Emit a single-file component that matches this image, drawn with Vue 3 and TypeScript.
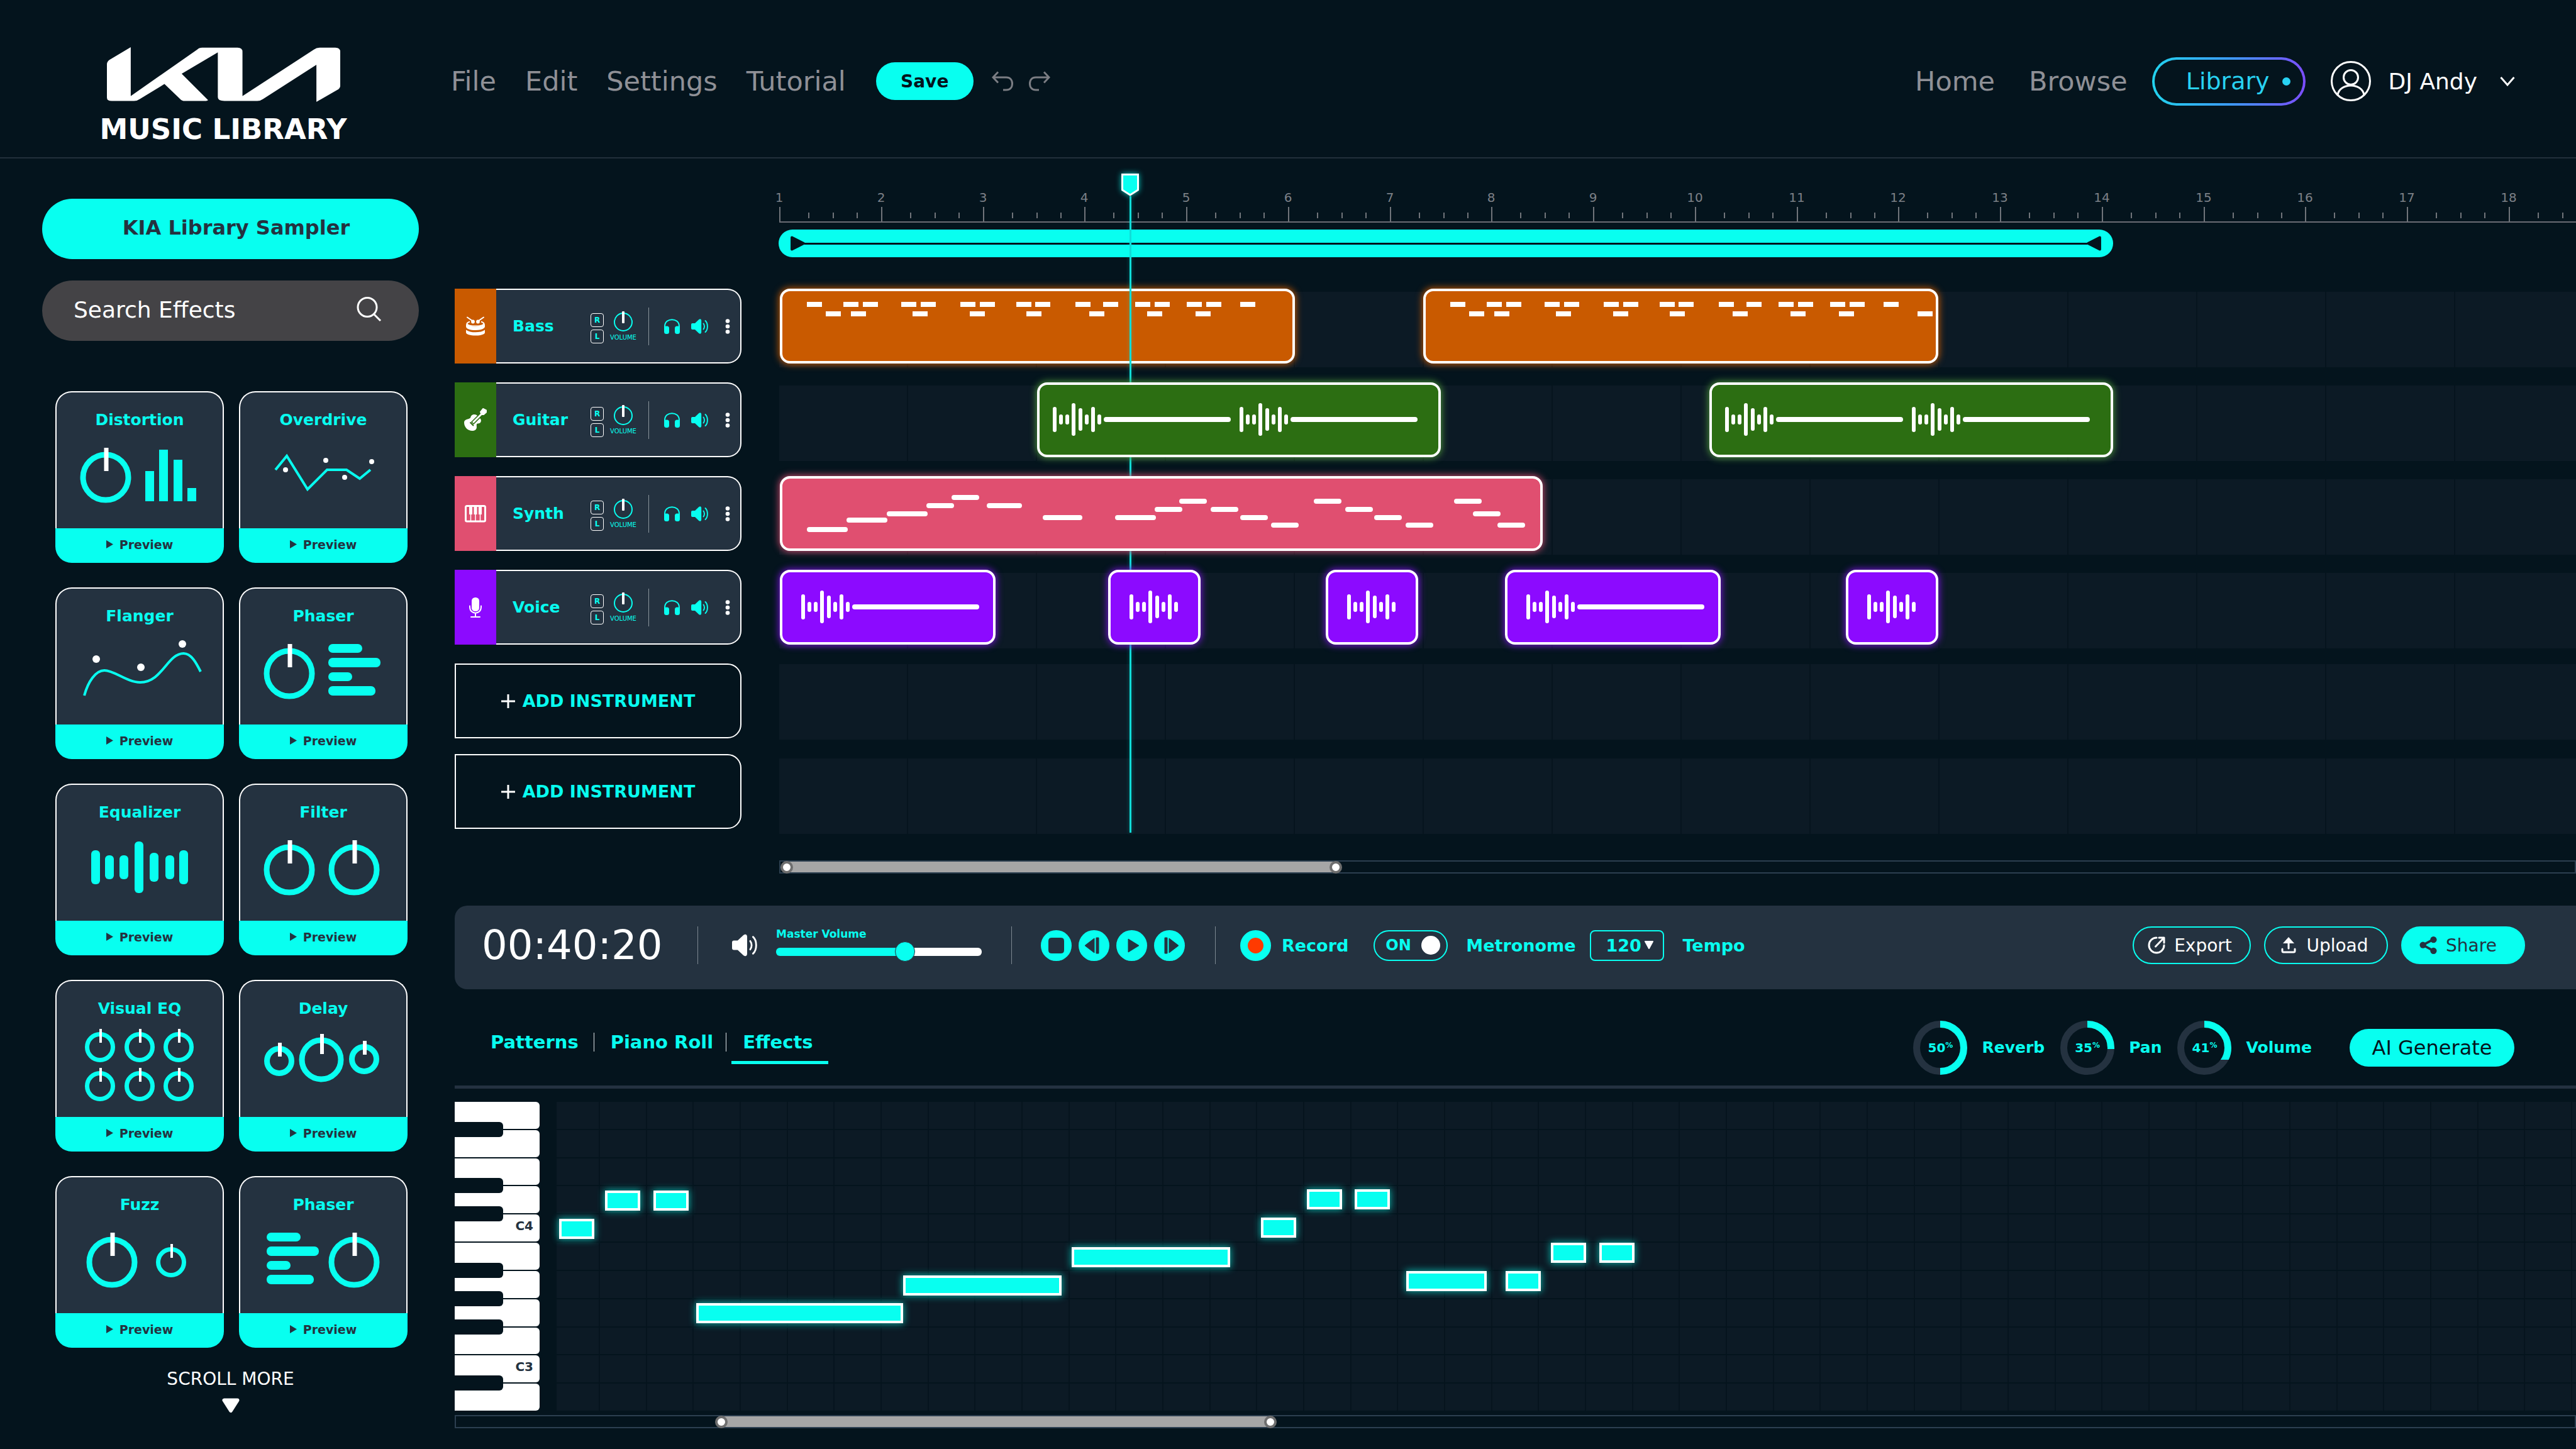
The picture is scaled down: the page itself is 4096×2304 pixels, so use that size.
<script setup lang="ts">
import { computed, ref } from 'vue'

type Shape =
  | { t: 'ring'; cx: number; cy: number; r: number; w: number; nw: number; nh: number; up: number }
  | { t: 'bar'; x: number; y: number; w: number; h: number; rx: number }
  | { t: 'line'; d: string }
  | { t: 'dot'; cx: number; cy: number; r: number }

const big = (cx: number): Shape => ({ t: 'ring', cx, cy: 75, r: 36, w: 9, nw: 7, nh: 37, up: 47 })
const small = (cx: number, cy: number, w: number, nw: number): Shape => ({ t: 'ring', cx, cy, r: 24 - w / 2, w, nw, nh: 22, up: 29 })
const bar = (x: number, y: number, w: number, h: number, rx: number): Shape => ({ t: 'bar', x, y, w, h, rx })
const dot = (cx: number, cy: number, r: number): Shape => ({ t: 'dot', cx, cy, r })

const phaserBars = (x: number): Shape[] => [
  bar(x, 28, 54, 14, 7),
  bar(x, 50, 83, 15, 7),
  bar(x, 73, 38, 14, 7),
  bar(x, 95, 75, 15, 7),
]

const effects: { name: string; shapes: Shape[] }[] = [
  { name: 'Distortion', shapes: [big(78), bar(141, 65, 14, 48, 0), bar(163, 31, 14, 82, 0), bar(186, 47, 14, 66, 0), bar(208, 92, 14, 21, 0)] },
  {
    name: 'Overdrive',
    shapes: [
      { t: 'line', d: 'M56 63 L74 41 L107 94 L138 63 H169 L190 77 L207 63' },
      dot(72, 63, 4), dot(136, 48, 4), dot(166, 75, 4), dot(209, 50, 4),
    ],
  },
  {
    name: 'Flanger',
    shapes: [
      { t: 'line', d: 'M44 110 C50 88 62 70 76 70 C92 70 112 89 133 89 C168 89 176 43 202 43 C214 43 222 58 229 72' },
      dot(63, 52, 6), dot(134, 65, 6), dot(200, 28, 6),
    ],
  },
  { name: 'Phaser', shapes: [big(78), ...phaserBars(140)] },
  {
    name: 'Equalizer',
    shapes: [
      bar(55, 44, 14, 54, 6), bar(77, 52, 14, 38, 6), bar(100, 52, 14, 38, 6), bar(124, 30, 14, 82, 6),
      bar(148, 48, 14, 46, 6), bar(173, 52, 14, 38, 6), bar(195, 44, 14, 54, 6),
    ],
  },
  { name: 'Filter', shapes: [big(78), big(181)] },
  { name: 'Visual EQ', shapes: [45, 107].flatMap((cy) => [69, 132, 194].map((cx) => small(cx, cy, 7, 4))) },
  {
    name: 'Delay',
    shapes: [
      small(62, 67, 9, 6),
      { t: 'ring', cx: 129, cy: 65, r: 31, w: 9, nw: 6, nh: 32, up: 41 },
      small(197, 64, 9, 6),
    ],
  },
  { name: 'Fuzz', shapes: [big(88), small(182, 75, 7, 4)] },
  { name: 'Phaser', shapes: [...phaserBars(42), big(181)] },
]

type Box = { x: number; y: number; w: number }
type Clip = { x: number; w: number; blocks?: Box[]; waves?: number[]; tail?: boolean }

const bassTop = [43, 101, 132, 193, 224, 287, 318, 376, 406, 470, 514, 565, 596, 647, 678, 732]
const bassLow = [73, 113, 211, 302, 392, 492, 584, 661]
const bass = (extra: number[]): Box[] => [
  ...bassTop.map((x) => ({ x, y: 21, w: 24 })),
  ...[...bassLow, ...extra].map((x) => ({ x, y: 36, w: 24 })),
]
const melody: Box[] = [
  [43, 81, 65], [106, 66, 65], [170, 56, 65], [233, 43, 44], [273, 30, 44], [329, 43, 56], [418, 62, 63],
  [533, 62, 65], [596, 49, 44], [635, 36, 44], [685, 49, 44], [732, 62, 44], [781, 74, 44], [849, 36, 44],
  [899, 49, 44], [945, 62, 44], [995, 74, 44], [1072, 36, 44], [1102, 56, 44], [1141, 74, 44],
].map(([x, y, w]) => ({ x, y, w }))

const tracks: { name: string; icon: string; kind: string; clips: Clip[] }[] = [
  { name: 'Bass', icon: 'drum', kind: 'bass', clips: [{ x: 1, w: 819, blocks: bass([]) }, { x: 1024, w: 819, blocks: bass([786]) }] },
  { name: 'Guitar', icon: 'guitar', kind: 'guitar', clips: [{ x: 410, w: 642, waves: [28, 325], tail: true }, { x: 1479, w: 642, waves: [28, 325], tail: true }] },
  { name: 'Synth', icon: 'keys', kind: 'synth', clips: [{ x: 1, w: 1213, blocks: melody }] },
  {
    name: 'Voice', icon: 'mic', kind: 'voice',
    clips: [
      { x: 1, w: 343, waves: [37], tail: true }, { x: 523, w: 147, waves: [37] }, { x: 869, w: 147, waves: [37] },
      { x: 1154, w: 343, waves: [37], tail: true }, { x: 1696, w: 147, waves: [37] },
    ],
  },
]
const wave = [[0, 20], [10, 8], [20, 8], [30, 26], [41, 18], [51, 8], [61, 20], [71, 8]]

const BAR = 161.75
const bars = Array.from({ length: 18 }, (_, i) => ({ n: i + 1, w: Math.round((i + 1) * BAR) - Math.round(i * BAR) }))

const volume = ref(64)
const fill = computed(() => `${volume.value}%`)
const metronome = ref(true)
const tempo = ref('120')
const search = ref('')

const gauges = [
  { name: 'Reverb', value: 50, cut: 86 },
  { name: 'Pan', value: 35, cut: 45 },
  { name: 'Volume', value: 41, cut: 62 },
]

const keys = Array.from({ length: 11 }, (_, i) => ({
  label: i === 4 ? 'C4' : i === 9 ? 'C3' : '',
  sharp: [0, 2, 3, 5, 6, 7, 9].includes(i),
}))
const notes: Box[] = [
  [4, 186, 56], [77, 141, 56], [154, 141, 56], [222, 320, 329], [551, 276, 252], [819, 231, 252], [1120, 184, 56],
  [1193, 139, 56], [1269, 139, 56], [1351, 269, 128], [1509, 269, 56], [1581, 224, 56], [1658, 224, 56],
].map(([x, y, w]) => ({ x, y, w }))
</script>

<template>
  <div class="app">
    <svg class="defs" aria-hidden="true">
      <symbol id="speaker" viewBox="0 0 27 24">
        <path fill="currentColor" d="M2 7H6L12 1.3C14 -.4 16.2 0 16.2 3V21C16.2 24 14 24.4 12 22.7L6 17H2Q0 17 0 15V9Q0 7 2 7Z" />
        <path fill="none" stroke="currentColor" stroke-width="1.9" stroke-linecap="round" d="M19.5 7.5C21.5 10 21.5 14 19.5 16.5M22.5 3C27 7 27 17 22.5 21" />
      </symbol>
      <symbol id="headphones" viewBox="0 0 25 24">
        <path fill="none" stroke="currentColor" stroke-width="2" d="M1 15V12C1 -2.5 24 -2.5 24 12V15" />
        <rect y="11.5" width="8" height="12.5" rx="3.5" fill="currentColor" /><rect x="17" y="11.5" width="8" height="12.5" rx="3.5" fill="currentColor" />
      </symbol>
      <symbol id="drum" viewBox="0 0 30 31">
        <path fill="none" stroke="currentColor" stroke-width="2" stroke-linecap="round" d="M2 1.5L10 7M28 1.5L20 7" />
        <circle cx="11" cy="8.5" r="2.9" fill="currentColor" /><circle cx="19" cy="8.5" r="2.9" fill="currentColor" />
        <path fill="none" stroke="currentColor" stroke-width="2" d="M6 8.5C-2 11 1 15.5 15 15.5S32 11 24 8.5" />
        <path fill="currentColor" d="M0 11C1 15 7 16.5 15 16.5S29 15 30 11V16C30 20 23 22 15 22S0 20 0 16ZM0 21.5C4 24.5 9 25.3 15 25.3S26 24.5 30 21.5V25.5C30 29 23 30.5 15 30.5S0 29 0 25.5Z" />
      </symbol>
      <symbol id="guitar" viewBox="0 0 36 37">
        <path fill="currentColor" d="M0 23C0 17 7 18 10 15.5C11 10 16 9 20 11L26 17C28 19 27 25 21 24.5C18 26 22 31 18 34.5C11 39 0 33 0 23Z" />
        <path fill="none" stroke="#2c6e12" stroke-width="6" d="M13 24L28 9" />
        <path fill="none" stroke="#2c6e12" stroke-width="2" d="M9.5 22.5L15 28" />
        <path fill="none" stroke="currentColor" stroke-width="3" d="M14 23L29 8" />
        <path fill="currentColor" stroke="currentColor" stroke-width="2" stroke-linejoin="round" d="M26 6L30 1L35 3.5V6.5L31 10H28Z" />
      </symbol>
      <symbol id="keys" viewBox="0 0 34 28">
        <rect x="1.5" y="1.5" width="31" height="24.5" rx="2" fill="none" stroke="currentColor" stroke-width="3" />
        <path fill="currentColor" d="M7 1h5v14h-5zM14.5 1h5v14h-5zM22 1h5v14h-5z" />
        <path stroke="currentColor" stroke-width="1.5" d="M9.5 12V26M17 12V26M24.5 12V26" />
      </symbol>
      <symbol id="mic" viewBox="0 0 20 32">
        <rect x="4" width="12" height="22" rx="5.5" fill="currentColor" />
        <path fill="none" stroke="currentColor" stroke-width="2" stroke-linecap="round" d="M1 13.5V15C1 28 19 28 19 15V13.5M10 25V31M3 31H17" />
      </symbol>
      <symbol id="tri" viewBox="0 0 24 24">
        <path fill="currentColor" stroke="currentColor" stroke-width="4" stroke-linejoin="round" d="M3 3L21 12L3 21Z" />
      </symbol>
    </svg>

    <header class="top">
      <div class="brand">
        <svg class="logo" viewBox="131 200 284 233" preserveAspectRatio="none" aria-label="KIA">
          <path fill="#fff" d="M160 200V408L241 210Q243 202 247 202H290Q296 202 296 220V408L383 210Q386 202 390 202H409Q415 202 415 220V365Q415 375 411 383L386 433V275L321 421Q318 429 314 429H274Q266 429 266 413V222L222 313L254 425Q254 429 250 429H226Q222 429 220 420L201 357L171 421Q168 429 164 429H137Q131 429 131 415V272Q131 262 134 254Z" />
        </svg>
        <strong>MUSIC LIBRARY</strong>
      </div>
      <nav class="menu">
        <a href="#file">File</a><a href="#edit">Edit</a><a href="#settings">Settings</a><a href="#tutorial">Tutorial</a>
      </nav>
      <button class="save">Save</button>
      <div class="history">
        <button aria-label="Undo">
          <svg viewBox="0 0 34 32"><path d="M10 1.5L2 10L10 18.5M2 10H23C29 10 32.5 14 32.5 20S29 30 23 30H18" /></svg>
        </button>
        <button aria-label="Redo">
          <svg viewBox="0 0 34 32"><path d="M24 1.5L32 10L24 18.5M32 10H11C5 10 1.5 14 1.5 20S5 30 11 30H16" /></svg>
        </button>
      </div>
      <nav class="site">
        <a href="#home">Home</a><a href="#browse">Browse</a>
        <a href="#library" class="current">Library<i></i></a>
      </nav>
      <button class="user">
        <svg class="avatar" viewBox="0 0 64 64">
          <g fill="none" stroke="#fff" stroke-width="3"><circle cx="32" cy="32" r="30.5" /><circle cx="32" cy="26" r="11.5" /><path d="M11 54C14 34 50 34 53 54" /></g>
        </svg>
        <span>DJ Andy</span>
        <svg class="chev" viewBox="0 0 24 17"><path fill="none" stroke="#fff" stroke-width="3" d="M1.5 2L12 14L22.5 2" /></svg>
      </button>
    </header>

    <div class="page">
      <aside class="side">
        <button class="sampler">KIA Library Sampler</button>
        <label class="search">
          <input v-model="search" type="search" placeholder="Search Effects" aria-label="Search Effects" />
          <svg viewBox="0 0 40 40"><path fill="none" stroke="#fff" stroke-width="3" d="M28 28L38 38M32 16.5A15 15 0 1 1 2 16.5A15 15 0 0 1 32 16.5Z" /></svg>
        </label>
        <div class="cards">
          <article v-for="(fx, i) in effects" :key="i" class="card">
            <div class="face">
              <h3>{{ fx.name }}</h3>
              <svg viewBox="0 0 264 156">
                <template v-for="(s, j) in fx.shapes" :key="j">
                  <g v-if="s.t === 'ring'">
                    <circle :cx="s.cx" :cy="s.cy" :r="s.r" :stroke-width="s.w" fill="none" stroke="#08fff0" />
                    <rect :x="s.cx - s.nw / 2 + 1" :y="s.cy - s.up" :width="s.nw" :height="s.nh" fill="#fff" />
                  </g>
                  <rect v-else-if="s.t === 'bar'" :x="s.x" :y="s.y" :width="s.w" :height="s.h" :rx="s.rx" fill="#08fff0" />
                  <path v-else-if="s.t === 'line'" :d="s.d" fill="none" stroke="#08fff0" stroke-width="4" />
                  <circle v-else :cx="s.cx" :cy="s.cy" :r="s.r" fill="#fff" />
                </template>
              </svg>
            </div>
            <button class="preview">
              <svg viewBox="0 0 11 13"><path fill="currentColor" d="M0 0L11 6.5L0 13Z" /></svg>Preview
            </button>
          </article>
        </div>
        <button class="more">
          SCROLL MORE
          <svg viewBox="0 0 28 24"><path fill="#fff" stroke="#fff" stroke-width="6" stroke-linejoin="round" d="M3.5 3.5H24.5L14 20Z" /></svg>
        </button>
      </aside>

      <main class="main">
        <section class="arrange">
          <div class="heads">
            <div v-for="t in tracks" :key="t.name" class="head">
              <div class="tag" :class="t.kind"><svg :class="'icon-' + t.icon"><use :href="'#' + t.icon" /></svg></div>
              <div class="strip">
                <span class="name">{{ t.name }}</span>
                <div class="rl"><button>R</button><button>L</button></div>
                <div class="vol">
                  <svg viewBox="0 0 30 32"><circle cx="15" cy="17" r="14" fill="none" stroke="#08fff0" stroke-width="2" /><rect x="13" y="0" width="4" height="19" rx="1" fill="#fff" /></svg>
                  <span>VOLUME</span>
                </div>
                <div class="sound">
                  <button aria-label="Solo"><svg class="phones"><use href="#headphones" /></svg></button>
                  <button aria-label="Mute"><svg class="spk"><use href="#speaker" /></svg></button>
                  <button class="kebab" aria-label="More"><svg class="dots" viewBox="0 0 8 24"><g fill="#fff"><circle cx="4" cy="3.5" r="3.3" /><circle cx="4" cy="12" r="3.3" /><circle cx="4" cy="20.5" r="3.3" /></g></svg></button>
                </div>
              </div>
            </div>
            <div class="adds">
              <button v-for="n in 2" :key="n" class="add">
                <svg viewBox="0 0 22 22"><path stroke="#fff" stroke-width="3" d="M11 0V22M0 11H22" /></svg>ADD INSTRUMENT
              </button>
            </div>
          </div>

          <div class="timeline">
            <div class="ruler">
              <div v-for="b in bars" :key="b.n" class="bar" :style="{ width: b.w + 'px' }"><span>{{ b.n }}</span></div>
            </div>
            <div class="loop">
              <svg><use href="#tri" /></svg><i></i><svg class="flip"><use href="#tri" /></svg>
            </div>
            <div class="lanes">
              <div v-for="t in tracks" :key="t.name" class="lane">
                <div v-for="(c, i) in t.clips" :key="i" class="clip" :class="t.kind" :style="{ left: c.x + 'px', width: c.w + 'px' }">
                  <svg :viewBox="`4 4 ${c.w - 8} 111`" fill="#fff">
                    <rect v-for="(b, j) in c.blocks" :key="'b' + j" :x="b.x" :y="b.y" :width="b.w" height="8" :rx="t.kind === 'synth' ? 4 : 0" />
                    <g v-for="w in c.waves" :key="w">
                      <rect v-for="([x, h], j) in wave" :key="j" :x="w + x - 3" :y="59 - h" width="6" :height="h * 2" rx="3" />
                      <rect v-if="c.tail" :x="w + 78" y="55" width="202" height="8" rx="4" />
                    </g>
                  </svg>
                </div>
              </div>
              <div class="spare"><div v-for="n in 2" :key="n" class="lane"></div></div>
            </div>
            <div class="scroll first"><div class="thumb"><i></i><i></i></div></div>
            <div class="playhead">
              <svg viewBox="0 0 28 36"><path fill="#08fff0" stroke="#fff" stroke-width="3" d="M1.5 1.5H26.5V26L14 34L1.5 26Z" /></svg>
              <i></i>
            </div>
          </div>
        </section>

        <section class="transport">
          <time>00:40:20</time>
          <hr />
          <svg class="master"><use href="#speaker" /></svg>
          <label class="mv">Master Volume
            <input v-model.number="volume" type="range" min="0" max="100" :style="{ '--fill': fill }" />
          </label>
          <hr />
          <div class="buttons">
            <button aria-label="Stop"><svg viewBox="0 0 49 49"><rect x="12.5" y="12.5" width="24" height="24" rx="4" /></svg></button>
            <button aria-label="Back"><svg viewBox="0 0 49 49"><path d="M10 24.5L25 13V36Z" /><rect x="28" y="12" width="4" height="25" /></svg></button>
            <button aria-label="Play"><svg viewBox="0 0 49 49"><path d="M19 14V35L36 24.5Z" /></svg></button>
            <button aria-label="Forward"><svg viewBox="0 0 49 49"><path d="M39 24.5L24 13V36Z" /><rect x="17" y="12" width="4" height="25" /></svg></button>
          </div>
          <hr />
          <button class="record"><i></i>Record</button>
          <div class="metro">
            <label class="toggle"><span>ON</span><input id="metronome" v-model="metronome" type="checkbox" role="switch" aria-label="Metronome on" /></label>
            <label for="metronome">Metronome</label>
          </div>
          <div class="tempo">
            <div class="pick">
              <select id="tempo" v-model="tempo"><option>120</option><option>140</option></select>
              <svg viewBox="0 0 14 14"><path fill="#fff" stroke="#fff" stroke-width="2" stroke-linejoin="round" d="M1 1H13L7 12Z" /></svg>
            </div>
            <label for="tempo">Tempo</label>
          </div>
          <div class="actions">
            <button class="export">
              <svg viewBox="0 0 28 28"><path fill="none" stroke="#fff" stroke-width="3" stroke-linecap="round" stroke-linejoin="round" d="M14 2A12 12 0 1 0 26 14M12.5 16L25 3M18 2H26V10" /></svg>Export
            </button>
            <button>
              <svg viewBox="0 0 28 28"><path fill="none" stroke="#fff" stroke-width="3" stroke-linecap="round" d="M14 6V19M4 20V23Q4 25 6 25H22Q24 25 24 23V20" /><path fill="#fff" d="M14 1L23 11H5Z" /></svg>Upload
            </button>
            <button class="share">
              <svg viewBox="0 0 30 30"><path fill="none" stroke="#243240" stroke-width="4" d="M23 5.5L6 14.5L24 24.5" /><g fill="#243240"><circle cx="6" cy="14.5" r="5.5" /><circle cx="24" cy="5.5" r="5.5" /><circle cx="24" cy="24.5" r="5.5" /></g></svg>Share
            </button>
          </div>
        </section>

        <section class="editorbar">
          <nav class="tabs">
            <a href="#patterns">Patterns</a><a href="#roll">Piano Roll</a><a href="#effects" class="on">Effects</a>
          </nav>
          <div class="gauges">
            <div v-for="g in gauges" :key="g.name" class="gauge">
              <div class="dial">
                <svg viewBox="0 0 86 86">
                  <clipPath :id="'cut-' + g.name"><rect x="43" y="0" width="43" :height="g.cut" /></clipPath>
                  <circle cx="43" cy="43" r="37.5" fill="none" stroke="#243240" stroke-width="11" />
                  <circle cx="43" cy="43" r="37.5" fill="none" stroke="#08fff0" stroke-width="11" :clip-path="`url(#cut-${g.name})`" />
                </svg>
                <b>{{ g.value }}<small>%</small></b>
              </div>
              <span>{{ g.name }}</span>
            </div>
          </div>
          <button class="ai">AI Generate</button>
        </section>

        <section class="roll">
          <div class="keys">
            <div v-for="(k, i) in keys" :key="i" class="key" :class="{ sharp: k.sharp }">{{ k.label }}</div>
          </div>
          <div class="grid">
            <div v-for="n in 11" :key="n" class="row"></div>
            <i v-for="(n, i) in notes" :key="i" class="note" :style="{ left: n.x + 'px', top: n.y + 'px', width: n.w + 'px' }"></i>
          </div>
        </section>
        <div class="scroll second"><div class="thumb"><i></i><i></i></div></div>
      </main>
    </div>
  </div>
</template>

<style>
body { background: #04141d; }
</style>

<style scoped>
.app {
  --cyan: #08fff0;
  --panel: #243240;
  --bg: #04141d;
  min-height: 100vh;
  overflow-x: clip;
  background: var(--bg);
  color: #fff;
  font-family: "DejaVu Sans", sans-serif;
  box-sizing: border-box;
}
.app *, .app *::before, .app *::after { box-sizing: border-box; }
button, input, select { font-family: inherit; margin: 0; }
button { border: 0; background: none; color: inherit; padding: 0; cursor: pointer; white-space: nowrap; }
a { color: inherit; text-decoration: none; white-space: nowrap; }
svg { display: block; flex: none; }
.defs { position: absolute; width: 0; height: 0; }

.top { display: flex; align-items: center; padding: 8px 97px 0 155px; border-bottom: 2px solid #22303b; }
.brand { width: 400px; display: flex; flex-direction: column; align-items: center; gap: 22px; padding: 67px 0 22px; }
.logo { width: 371px; height: 87px; }
.brand strong { font-size: 45px; line-height: 44px; white-space: nowrap; }
.menu { display: flex; gap: 46px; margin-left: 162px; }
.menu a, .site a { font-size: 43px; line-height: 48px; color: #8f9096; }
.save { width: 155px; height: 60px; margin-left: 48px; border-radius: 30px; background: var(--cyan); color: #04141d; font-size: 28px; font-weight: 700; }
.history { display: flex; gap: 25px; margin-left: 29px; }
.history svg { width: 34px; height: 32px; fill: none; stroke: #7b7d83; stroke-width: 3; }
.site { display: flex; align-items: center; gap: 54px; margin-left: auto; }
.site .current {
  display: flex; align-items: center; justify-content: flex-end; gap: 20px; width: 244px; height: 77px; margin-left: -15px; padding-right: 20px;
  border: 4px solid transparent; border-radius: 39px; font-size: 38px; color: #28d2f2;
  background: linear-gradient(var(--bg), var(--bg)) padding-box, linear-gradient(90deg, #22d3ee, #3b9bf5 50%, #7c4dff) border-box;
}
.current i { width: 13px; height: 13px; border-radius: 50%; background: #28d2f2; }
.user { display: flex; align-items: center; margin-left: 40px; font-size: 36px; }
.avatar { width: 64px; height: 64px; margin-right: 28px; }
.chev { width: 24px; height: 17px; margin-left: 36px; }

.page { display: flex; }
.side { width: 723px; flex: none; padding: 64px 57px 0 67px; display: flex; flex-direction: column; }
.sampler { height: 96px; padding: 0 0 4px 18px; border-radius: 48px; background: var(--cyan); color: var(--panel); font-size: 32px; font-weight: 700; }
.search { display: flex; align-items: center; height: 96px; margin-top: 34px; padding: 0 59px 4px 50px; border-radius: 48px; background: #444346; }
.search input { flex: 1; min-width: 0; border: 0; padding: 0; outline: 0; background: none; color: #fff; font-size: 36px; }
.search input::placeholder { color: #fff; opacity: 1; }
.search svg { width: 40px; height: 40px; }
.cards { display: grid; grid-template-columns: 1fr 1fr; gap: 39px 24px; margin-top: 80px; padding: 0 18px 0 21px; }
.face { border: 2px solid #fff; border-bottom: 0; border-radius: 26px 26px 0 0; background: var(--panel); padding-top: 28px; }
.face h3 { margin: 0; font-size: 25px; line-height: 32px; text-align: center; color: var(--cyan); }
.face svg { width: 100%; height: 156px; }
.preview { display: flex; align-items: center; justify-content: center; gap: 10px; width: 100%; height: 55px; padding-bottom: 4px; border-radius: 0 0 26px 26px; background: var(--cyan); color: var(--panel); font-size: 19px; font-weight: 700; }
.preview svg { width: 11px; height: 13px; }
.more { display: flex; flex-direction: column; align-items: center; gap: 14px; margin-top: 34px; font-size: 28px; line-height: 32px; }
.more svg { width: 28px; height: 24px; }

.main { flex: 1; min-width: 0; }
.arrange { display: flex; gap: 60px; }
.heads { width: 456px; flex: none; padding-top: 207px; display: flex; flex-direction: column; gap: 30px; }
.head { display: flex; height: 119px; }
.tag { width: 66px; display: flex; align-items: center; justify-content: center; }
.bass { background: #c95a00; --glow: #c95a00; }
.guitar { background: #2c6e12; --glow: #4f9a3a; }
.synth { background: #e04f70; --glow: #c8486a; }
.voice { background: #8c0aff; --glow: #7a14e0; }
.icon-drum { width: 30px; height: 31px; }
.icon-guitar { width: 36px; height: 37px; }
.icon-keys { width: 34px; height: 28px; }
.icon-mic { width: 20px; height: 32px; }
.strip { flex: 1; display: flex; align-items: center; border: 2px solid #fff; border-left: 0; border-radius: 0 22px 22px 0; background: var(--panel); padding-left: 26px; color: var(--cyan); }
.name { width: 124px; font-size: 25px; font-weight: 700; }
.rl { display: flex; flex-direction: column; gap: 4px; padding-top: 6px; }
.rl button { width: 21px; height: 22px; border: 1px solid #fff; border-radius: 4px; font-size: 12px; font-weight: 700; line-height: 20px; }
.vol { width: 44px; margin-left: 9px; display: flex; flex-direction: column; align-items: center; font-size: 10px; line-height: 12px; gap: 4px; }
.vol svg { width: 30px; height: 32px; }
.sound { display: flex; align-items: center; height: 60px; margin-left: 18px; padding-left: 24px; border-left: 1px solid #8a949c; gap: 18px; }
.phones { width: 25px; height: 24px; }
.spk { width: 27px; height: 24px; }
.kebab { margin-left: 9px; }
.dots { width: 8px; height: 24px; }
.adds { display: flex; flex-direction: column; gap: 25px; }
.add { display: flex; align-items: center; justify-content: center; gap: 12px; height: 119px; border: 2px solid #fff; border-radius: 0 22px 22px 0; color: var(--cyan); font-size: 27px; font-weight: 700; }
.add svg { width: 22px; height: 22px; }

.timeline { position: relative; flex: 1; min-width: 0; padding-top: 48px; }
.ruler { display: flex; height: 54px; border-bottom: 2px solid #6a6c74; }
.bar {
  flex: none; color: #7c8087; font-size: 20px; line-height: 28px; align-self: stretch;
  --t: linear-gradient(#70747a, #70747a);
  background: var(--t) 0 29px / 2px 24px no-repeat, var(--t) 46px 38px / 2px 9px no-repeat, var(--t) 85px 38px / 2px 9px no-repeat, var(--t) 123px 38px / 2px 9px no-repeat;
}
.bar:last-child { flex: 0 1 auto; min-width: 0; }
.bar span { display: block; width: 60px; margin-left: -30px; text-align: center; }
.loop { display: flex; align-items: center; width: 2122px; height: 44px; margin: 11px 0 0 -1px; padding: 0 18px; border-radius: 22px; background: var(--cyan); color: #04141d; }
.loop svg { width: 25px; height: 26px; }
.loop .flip { transform: scaleX(-1); }
.loop i { flex: 1; height: 3px; margin: 0 -2px; background: #04141d; }
.lanes { display: flex; flex-direction: column; gap: 29px; margin-top: 55px; }
.lane { position: relative; height: 120px; background: repeating-linear-gradient(90deg, #0c1a25 0 203px, #06141e 203px 205px); }
.spare { display: flex; flex-direction: column; gap: 30px; margin-top: -4px; }
.clip { position: absolute; top: -5px; height: 119px; border: 4px solid #fff; border-radius: 16px; box-shadow: 0 0 12px 1px var(--glow); z-index: 2; }
.clip.bass { z-index: 0; }
.clip svg { width: 100%; height: 111px; }
.playhead { position: absolute; z-index: 1; left: 544px; top: 24px; bottom: 65px; display: flex; flex-direction: column; align-items: center; }
.playhead svg { width: 28px; height: 36px; overflow: visible; filter: drop-shadow(0 0 5px #08c8c0); }
.playhead i { flex: 1; width: 3px; background: #10dcd8; box-shadow: 0 0 6px rgba(8, 255, 240, 0.35); }

.scroll { height: 21px; border: 2px solid #2c3f50; }
.thumb { display: flex; justify-content: space-between; align-items: center; width: 893px; height: 17px; background: linear-gradient(#a6a6a6, #a6a6a6) 10px 0 / 873px 17px no-repeat; }
.thumb i { width: 20px; height: 20px; border: 4px solid #6e6e6e; border-radius: 50%; background: #fff; }
.first { margin-top: 42px; }
.second { margin-top: 7px; }
.second .thumb { margin-left: 412px; }

.transport { display: flex; align-items: center; height: 133px; margin-top: 51px; padding: 0 81px 7px 43px; border-radius: 20px 0 0 20px; background: var(--panel); color: var(--cyan); font-size: 27px; font-weight: 700; white-space: nowrap; }
.transport time { width: 285px; font-size: 64px; font-weight: 400; color: #fff; }
.transport hr { width: 1px; height: 60px; margin: 0; border: 0; background: #7d8891; }
.transport time + hr { margin-left: 58px; }
.master { width: 40px; height: 36px; margin-left: 54px; color: #fff; }
.mv { display: flex; flex-direction: column; gap: 3px; width: 327px; margin: 0 47px 0 30px; font-size: 17px; line-height: 17px; }
.mv input { appearance: none; width: 100%; height: 32px; background: none; }
.mv input::-webkit-slider-runnable-track { height: 13px; border-radius: 6px; background: linear-gradient(90deg, var(--cyan) var(--fill), #fff var(--fill)); }
.mv input::-webkit-slider-thumb { appearance: none; width: 32px; height: 32px; margin-top: -10px; border: 1px solid var(--panel); border-radius: 50%; background: var(--cyan); }
.buttons { display: flex; gap: 11px; margin: 0 48px 0 46px; }
.buttons button { border-radius: 50%; background: var(--cyan); }
.buttons svg { width: 49px; height: 49px; fill: var(--panel); stroke: var(--panel); stroke-width: 1; stroke-linejoin: round; }
.record { display: flex; align-items: center; gap: 17px; margin-left: 39px; font-size: 27px; font-weight: 700; }
.record i { width: 49px; height: 49px; border-radius: 50%; border: 12px solid var(--cyan); background: #ff3a00; }
.metro { display: flex; align-items: center; gap: 29px; margin-left: 40px; }
.toggle { display: flex; align-items: center; justify-content: space-between; width: 118px; height: 49px; padding: 0 10px 0 17px; border: 2px solid var(--cyan); border-radius: 25px; font-size: 24px; }
.toggle input { appearance: none; width: 30px; height: 30px; border-radius: 50%; background: #fff; }
.tempo { display: flex; align-items: center; gap: 29px; margin-left: 23px; }
.pick { position: relative; }
.pick select { display: block; appearance: none; width: 118px; height: 49px; padding: 0 0 0 23px; border: 2px solid var(--cyan); border-radius: 8px; background: none; color: var(--cyan); font-size: 27px; font-weight: 700; }
.pick svg { position: absolute; right: 17px; top: 17px; width: 14px; height: 14px; pointer-events: none; }
.actions { display: flex; gap: 21px; margin-left: auto; }
.actions button { display: flex; align-items: center; justify-content: center; gap: 14px; width: 197px; height: 60px; border: 2px solid var(--cyan); border-radius: 30px; color: #fff; font-size: 28px; padding-right: 6px; }
.actions .export { width: 188px; }
.actions svg { width: 28px; height: 28px; }
.actions .share { background: var(--cyan); color: var(--panel); padding-right: 16px; }

.editorbar { display: flex; align-items: center; height: 158px; padding: 32px 98px 0 57px; border-bottom: 5px solid var(--panel); color: var(--cyan); white-space: nowrap; }
.tabs { display: flex; align-self: flex-start; padding-top: 37px; font-size: 29px; font-weight: 700; line-height: 30px; }
.tabs a { position: relative; padding: 0 24px 0 26px; }
.tabs a:first-child { padding-left: 0; }
.tabs a + a { border-left: 1px solid #dfe5e8; }
.tabs a:nth-child(2) { padding-right: 20px; }
.tabs .on::after { content: ""; position: absolute; left: 8px; right: 0; bottom: -20px; height: 5px; background: var(--cyan); }
.gauges { display: flex; gap: 25px; margin-left: auto; font-size: 25px; font-weight: 700; }
.gauge { display: flex; align-items: center; gap: 23px; }
.dial { display: grid; place-items: center; }
.dial > * { grid-area: 1 / 1; }
.dial svg { width: 86px; height: 86px; }
.dial b { display: flex; align-items: flex-start; font-size: 20px; line-height: 20px; }
.dial small { font-size: 12px; line-height: 12px; }
.ai { width: 262px; height: 60px; margin-left: 60px; border-radius: 30px; background: var(--cyan); color: #04141d; font-size: 32px; }

.roll { display: flex; gap: 27px; height: 491px; margin-top: 21px; }
.keys { width: 135px; display: flex; flex-direction: column; gap: 2px; }
.key { position: relative; flex: 1; padding: 6px 10px 0 0; border-radius: 0 6px 6px 0; background: #fff; color: var(--panel); font-size: 20px; line-height: 24px; font-weight: 700; text-align: right; }
.key.sharp::after { content: ""; position: absolute; z-index: 1; left: 0; bottom: -13px; width: 77px; height: 24px; border-radius: 0 6px 6px 0; background: #04141d; }
.grid { position: relative; flex: 1; min-width: 0; display: flex; flex-direction: column; gap: 2px; }
.row { flex: 1; background: linear-gradient(90deg, #06141e 0 2px, transparent 2px 75px, #06141e 75px 77px, transparent 77px 149px, #06141e 149px 151px, transparent 151px) 67px 0 / 224px 100% #0c1a25; }
.note { position: absolute; height: 32px; border: 4px solid #fff; background: var(--cyan); box-shadow: 0 0 12px 1px #0aa8a0; }
</style>
